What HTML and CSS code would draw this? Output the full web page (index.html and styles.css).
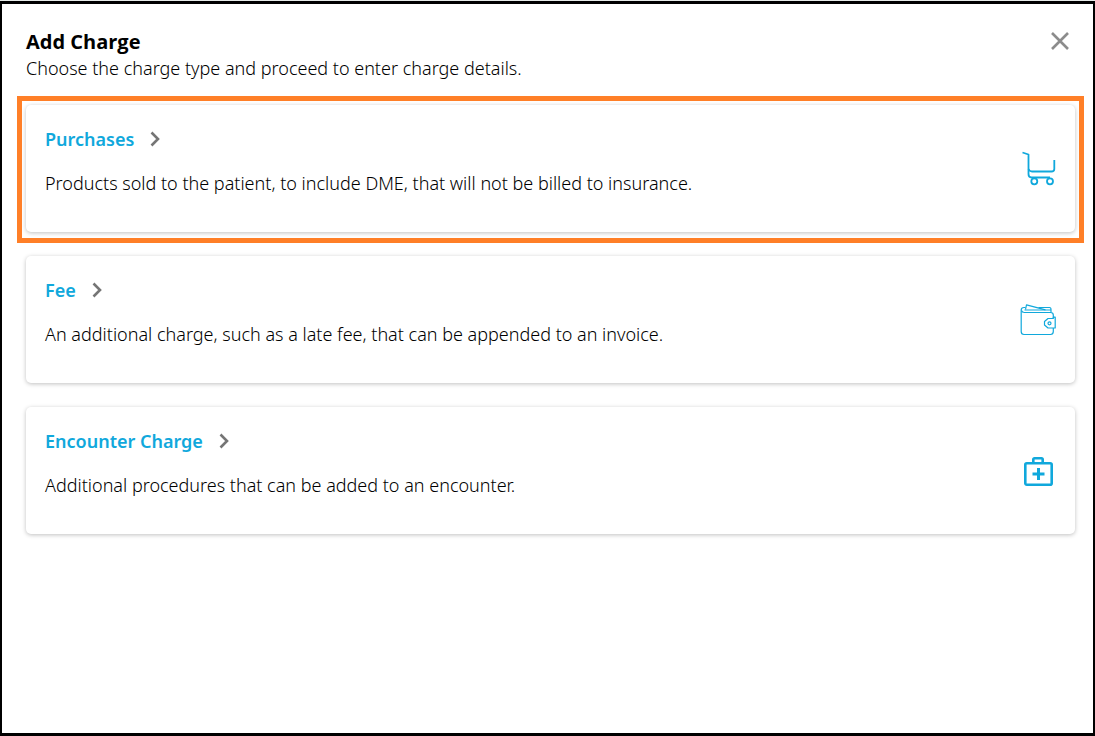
FILE: index.html
```html
<!DOCTYPE html>
<html lang="en">
<head>
<meta charset="utf-8">
<meta name="viewport" content="width=device-width, initial-scale=1">
<title>Add Charge</title>
<link rel="stylesheet" href="styles.css">
</head>
<body>
<main class="dialog" role="dialog" aria-labelledby="dialog-title">
  <header class="dialog-header">
    <div>
      <h1 class="dialog-title" id="dialog-title">Add Charge</h1>
      <p class="dialog-subtitle">Choose the charge type and proceed to enter charge details.</p>
    </div>
    <button class="close" type="button" aria-label="Close">
      <svg width="18" height="18" viewBox="0 0 18 18" fill="none" stroke="currentColor" stroke-width="2.6"><path d="M1 1l16 16M17 1L1 17"/></svg>
    </button>
  </header>

  <div class="cards">
    <section class="card card-highlighted">
      <div class="card-body">
        <button class="card-link" type="button">Purchases
          <svg class="chevron" width="10" height="16" viewBox="0 0 10 16"><path d="M1.500 1.500L8 8l-6.500 6.500"/></svg>
        </button>
        <p class="card-text">Products sold to the patient, to include DME, that will not be billed to insurance.</p>
      </div>
      <svg class="card-icon" width="36" height="36" viewBox="0 0 36 36" stroke-width="1.800">
        <path d="M2.500 1.500L8.500 3.500V23Q8.500 26.500 11.500 26.500H30"/>
        <path d="M8.500 18Q9.500 20.500 12 20.500H31.500Q34.300 20.500 34.300 18V9"/>
        <circle cx="14.300" cy="30.300" r="3"/>
        <circle cx="30" cy="30.300" r="3"/>
      </svg>
    </section>

    <section class="card">
      <div class="card-body">
        <button class="card-link" type="button">Fee
          <svg class="chevron" width="10" height="16" viewBox="0 0 10 16"><path d="M1.500 1.500L8 8l-6.500 6.500"/></svg>
        </button>
        <p class="card-text">An additional charge, such as a late fee, that can be appended to an invoice.</p>
      </div>
      <svg class="card-icon" width="36" height="36" viewBox="0 0 36 36" stroke-width="1.200">
        <g transform="translate(.5 2)">
          <path d="M5 3.500H3.500Q.7 3.500 .7 6V27.500Q.7 30.500 3.500 30.500H30Q32.800 30.500 32.800 27.500V24"/>
          <path d="M1 6.500Q1.500 8.500 4 8.500H30Q32.800 8.500 32.800 11V14"/>
          <path d="M4 6H30M30.500 8.200V5.500Q30.500 3.500 29 3.500H18"/>
          <path d="M5 5.500L6 .8L25 5.800"/>
          <path d="M34.700 14.500V24H27.500L24 21V17.500L27.500 14.500H32.800V13.200H34.700V14.500"/>
          <circle cx="29" cy="19.300" r="1.500"/>
        </g>
      </svg>
    </section>

    <section class="card">
      <div class="card-body">
        <button class="card-link" type="button">Encounter Charge
          <svg class="chevron" width="10" height="16" viewBox="0 0 10 16"><path d="M1.500 1.500L8 8l-6.500 6.500"/></svg>
        </button>
        <p class="card-text">Additional procedures that can be added to an encounter.</p>
      </div>
      <svg class="card-icon" width="36" height="36" viewBox="0 0 36 36" stroke-width="2.600">
        <rect x="5.300" y="10.300" width="26.400" height="21.400" rx="1.500"/>
        <path d="M13.300 10V6.500Q13.300 5.300 14.500 5.300H21.500Q22.700 5.300 22.700 6.500V10"/>
        <path d="M18.500 15V27M12.500 21H24.500" stroke-width="3"/>
      </svg>
    </section>
  </div>
</main>
</body>
</html>
```
FILE: styles.css
```css
* {
  box-sizing: border-box;
}

body {
  margin: 0;
  padding-top: 1px;
  min-height: 100vh;
  display: flex;
  background: #e6eae8;
  color: #000;
  font: 300 18px/24px "Noto Sans", "Open Sans", sans-serif;
}

h1,
p {
  margin: 0;
}

button {
  border: 0;
  padding: 0;
  background: none;
  font: inherit;
  cursor: pointer;
}

.dialog {
  flex: 1;
  border: solid #000;
  border-width: 3px 2px;
  padding: 26px 18px 26px 24px;
  background: #fff;
}

.dialog-header {
  display: flex;
  justify-content: space-between;
  padding-right: 6px;
  margin-bottom: 23px;
}

.dialog-title {
  font-family: "Open Sans", "Noto Sans", sans-serif;
  font-size: 20px;
  font-weight: 700;
  line-height: 24px;
}

.dialog-subtitle {
  line-height: 28px;
}

.close {
  height: 18px;
  margin-top: 2px;
  color: #8c8c8c;
}

.close svg {
  display: block;
}

.cards {
  display: flex;
  flex-direction: column;
  gap: 24px;
}

.card {
  position: relative;
  display: flex;
  align-items: center;
  justify-content: space-between;
  padding: 22px 19px;
  border-radius: 5px;
  background: #fff;
  box-shadow: 0 1px 4px rgba(0, 0, 0, 0.25);
}

.card-highlighted::after {
  content: "";
  position: absolute;
  inset: -9px -9px -11px;
  border: 5px solid #ff7f27;
  pointer-events: none;
}

.card-body {
  display: flex;
  flex-direction: column;
  align-items: flex-start;
  gap: 20px;
  padding-bottom: 15px;
}

.card-link {
  display: flex;
  align-items: center;
  gap: 16px;
  color: #10a8dc;
  font-weight: 600;
}

.chevron {
  fill: none;
  stroke: #757575;
  stroke-width: 2.6;
}

.card-icon {
  flex: none;
  fill: none;
  stroke: #10a8dc;
  stroke-linejoin: round;
}
```
